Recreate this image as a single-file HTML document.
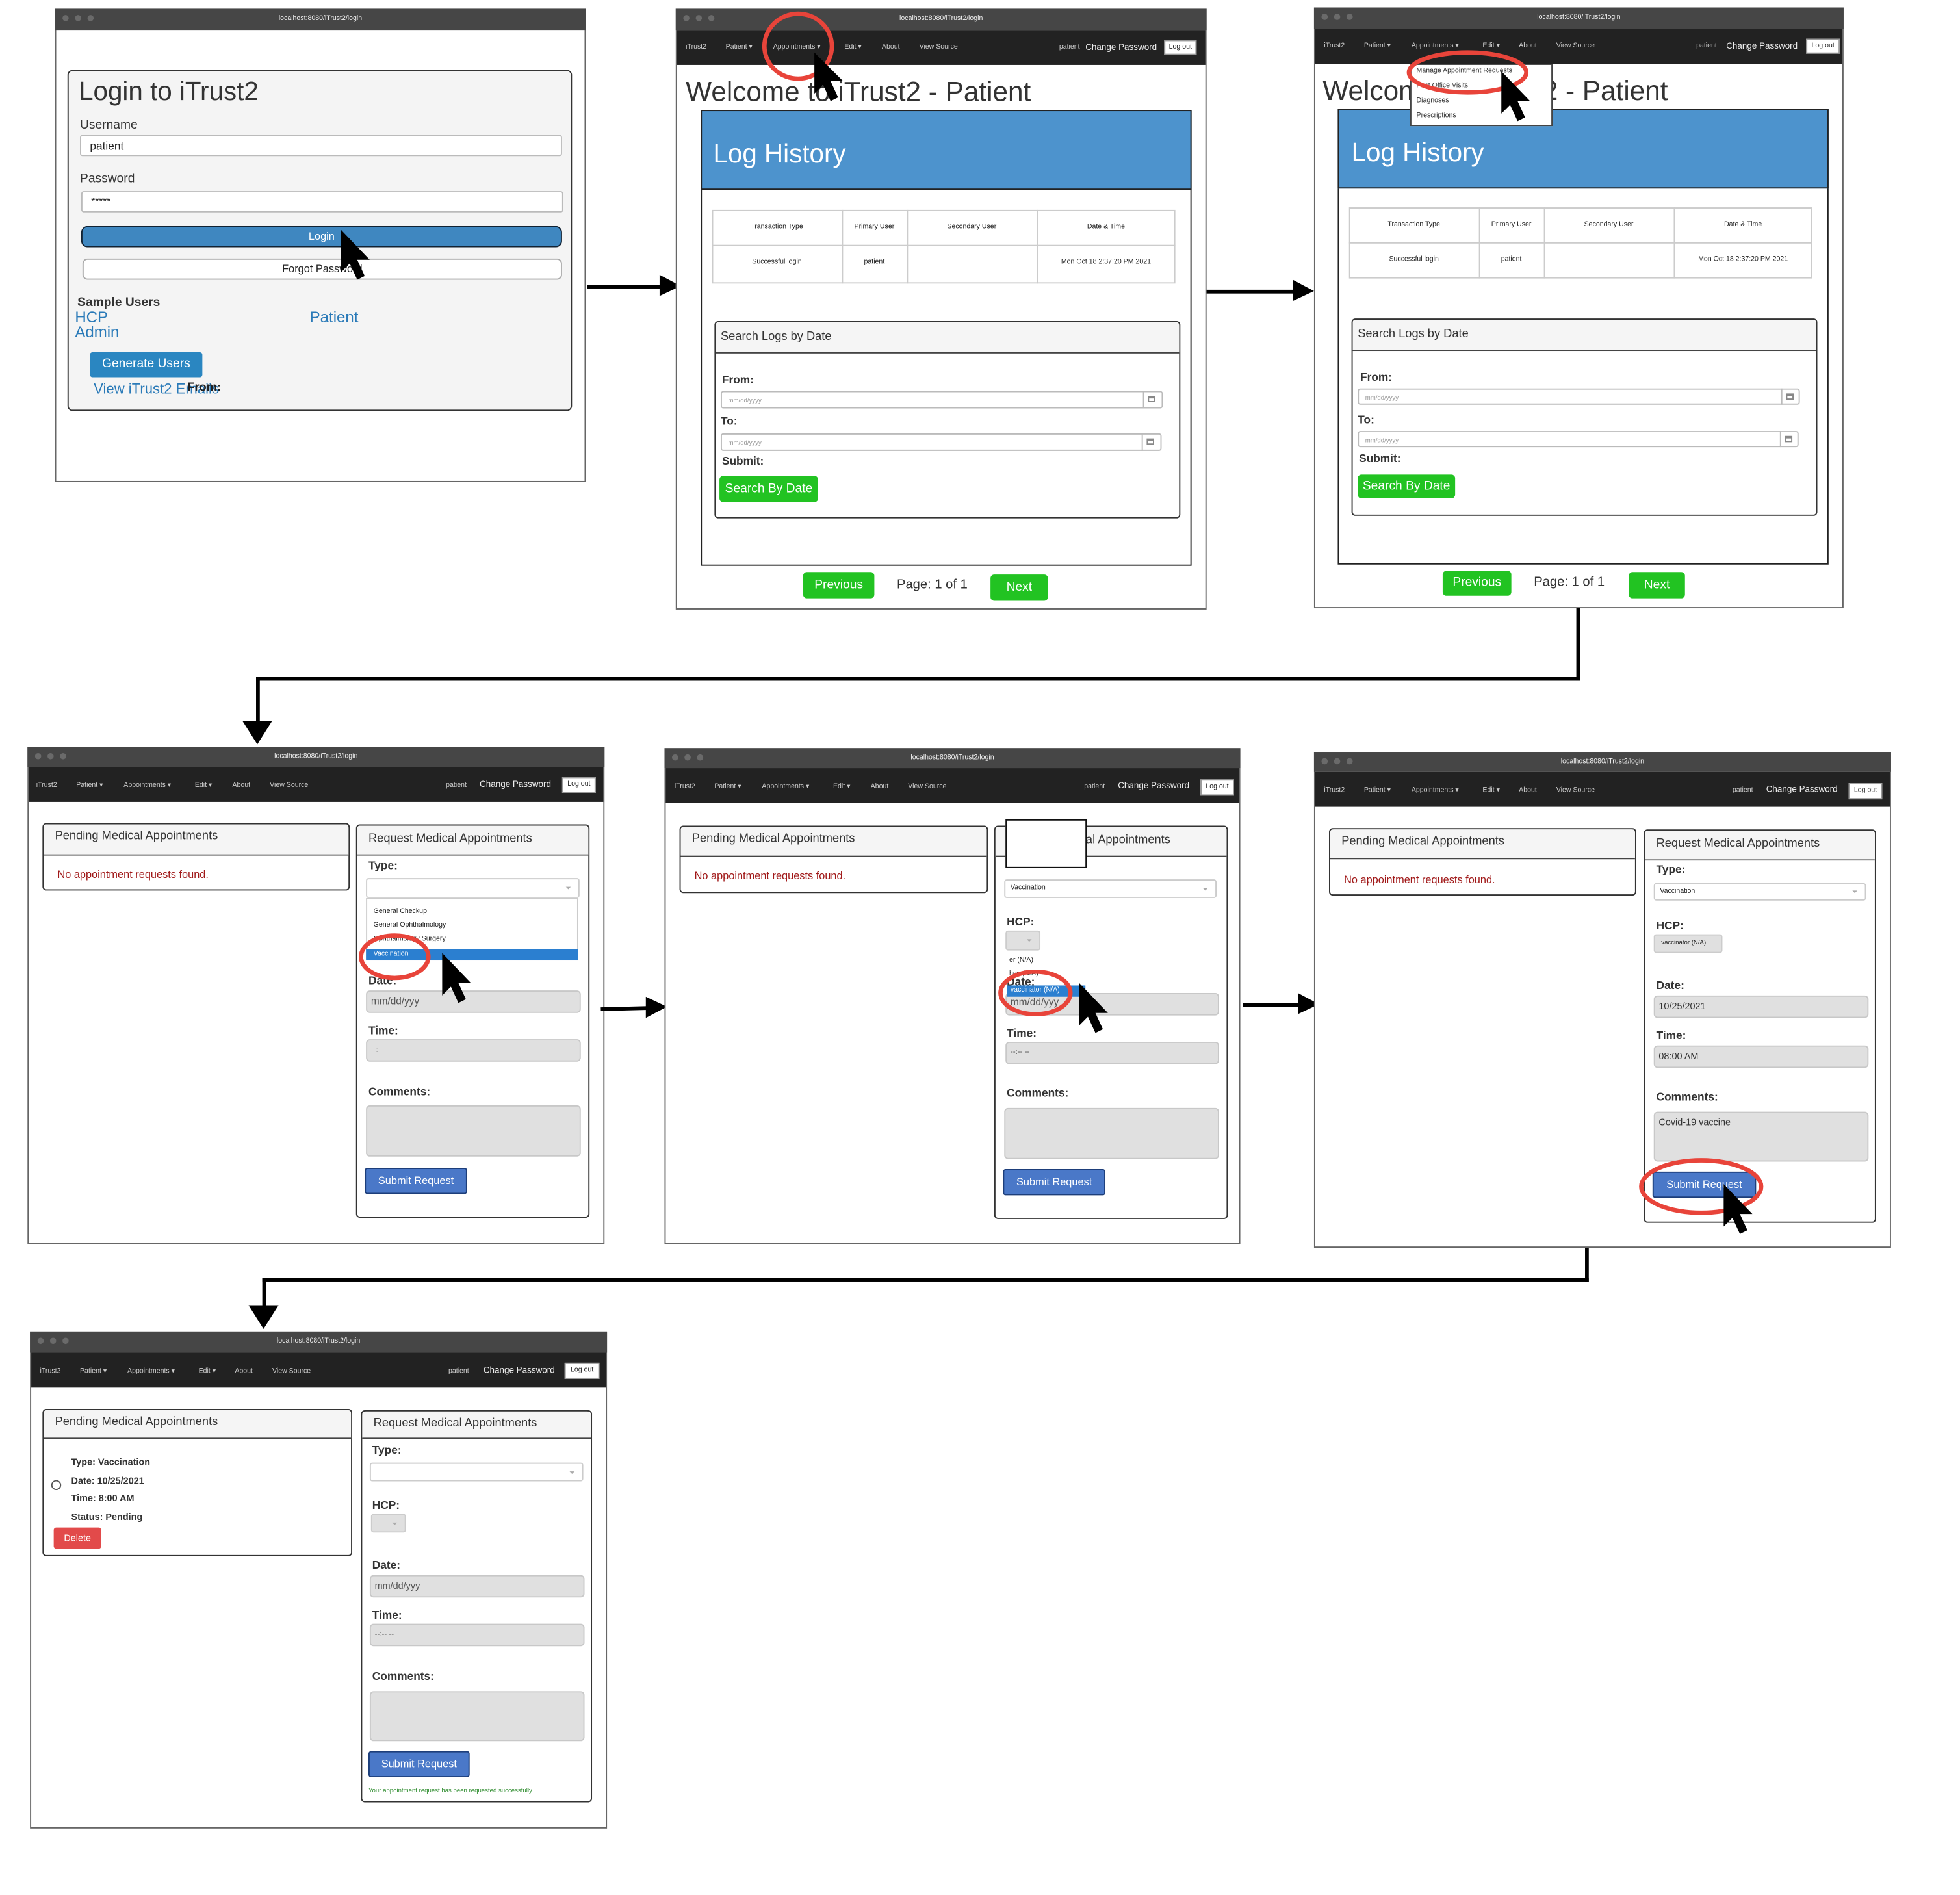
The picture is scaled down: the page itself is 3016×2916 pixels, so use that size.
<!DOCTYPE html>
<html><head><meta charset="utf-8">
<style>
*{box-sizing:border-box;margin:0;padding:0}
html,body{width:3016px;height:2915px;background:#fff;overflow:hidden}
#root{position:absolute;left:0;top:0;width:1570px;height:1517px;transform:scale(1.922);transform-origin:0 0;font-family:"Liberation Sans",sans-serif;color:#222}
.a{position:absolute;white-space:nowrap}
.win{position:absolute;border:1px solid #666;background:#fff}
.tb{position:absolute;background:#464646;color:#eee;font-size:5.5px;text-align:center}
.dot{position:absolute;width:5px;height:5px;border-radius:50%;background:#6a6a6a}
.nav{position:absolute;background:#222}
.nt{position:absolute;color:#ccc;font-size:5.5px;white-space:nowrap}
.cp{position:absolute;color:#eee;font-size:7px;white-space:nowrap}
.lo{position:absolute;background:#fff;border:1px solid #999;color:#222;font-size:5.5px;text-align:center}
.pnl{position:absolute;border:1px solid #333;border-radius:3px;background:#fff}
.ph{position:absolute;left:0;right:0;top:0;background:#f5f5f5;border-bottom:1px solid #444;border-radius:3px 3px 0 0;font-size:9.5px;color:#333;padding-left:9px}
.lbl{position:absolute;font-weight:bold;font-size:9px;color:#333;white-space:nowrap}
.inp{position:absolute;background:#e0e0e0;border:1px solid #c8c8c8;border-radius:3px;font-size:8px;color:#555;padding-left:3px}
.sel{position:absolute;background:#fff;border:1px solid #ccc;border-radius:2px;font-size:5.5px;color:#222;padding-left:4px}
.car{position:absolute;width:0;height:0;border-left:2.5px solid transparent;border-right:2.5px solid transparent;border-top:2.5px solid #aaa}
.btnb{position:absolute;background:#4a78c8;border:1px solid #1d3e7a;border-radius:2px;color:#fff;font-size:8.5px;text-align:center}
.grn{position:absolute;background:#22c322;border-radius:3px;color:#fff;font-size:10px;text-align:center}
.line{position:absolute;background:#000}
.cal{position:absolute;width:6px;height:5px;border:1px solid #888;border-top:2px solid #888}
</style></head><body><div id="root">

<!-- ================= WINDOW 1 LOGIN ================= -->
<div class="win" style="left:44px;top:7px;width:425px;height:379px"></div>
<div class="tb" style="left:44px;top:7px;width:425px;height:17px;line-height:17px">localhost:8080/iTrust2/login</div>
<div class="dot" style="left:50px;top:12px"></div><div class="dot" style="left:60px;top:12px"></div><div class="dot" style="left:70px;top:12px"></div>
<div class="a" style="left:54px;top:56px;width:404px;height:273px;background:#f4f4f4;border:1px solid #333;border-radius:4px"></div>
<div class="a" style="left:63px;top:62px;font-size:21px;color:#333">Login to iTrust2</div>
<div class="a" style="left:64px;top:95px;font-size:10px;color:#333">Username</div>
<div class="a" style="left:64px;top:108px;width:386px;height:17px;background:#fff;border:1px solid #bbb;border-radius:2px;font-size:9px;padding:3px 7px">patient</div>
<div class="a" style="left:64px;top:138px;font-size:10px;color:#333">Password</div>
<div class="a" style="left:65px;top:153px;width:386px;height:17px;background:#fff;border:1px solid #bbb;border-radius:2px;font-size:8px;padding:3px 7px">*****</div>
<div class="a" style="left:65px;top:181px;width:385px;height:17px;background:#3f87c0;border:1px solid #123;border-radius:5px;color:#fff;font-size:8.5px;text-align:center;line-height:15px">Login</div>
<div class="a" style="left:66px;top:207px;width:384px;height:17px;background:#fff;border:1px solid #aaa;border-radius:4px;font-size:8.5px;text-align:center;line-height:15px">Forgot Password</div>
<div class="a" style="left:62px;top:237px;font-size:10px;font-weight:bold;color:#333">Sample Users</div>
<div class="a" style="left:60px;top:247px;font-size:12.5px;color:#2a7ab8">HCP</div>
<div class="a" style="left:248px;top:247px;font-size:12.5px;color:#2a7ab8">Patient</div>
<div class="a" style="left:60px;top:259px;font-size:12.5px;color:#2a7ab8">Admin</div>
<div class="a" style="left:72px;top:282px;width:90px;height:20px;background:#2a86c1;border-radius:2px;color:#fff;font-size:10px;text-align:center;line-height:20px">Generate Users</div>
<div class="a" style="left:75px;top:306px;font-size:11.5px;color:#2a7ab8">View iTrust2 Emails</div>
<div class="a" style="left:150px;top:305px;font-size:9.5px;font-weight:bold;color:#222">From:</div>
<svg class="a" style="left:270px;top:184px" width="34" height="46"><polygon points="3,0 3,34 10,27 16,40 22,37 16,24 26,24" fill="#000"/></svg>

<!-- arrow 1 -->
<div class="line" style="left:470px;top:227.5px;width:62px;height:3px"></div>
<svg class="a" style="left:528px;top:220px" width="18" height="18"><polygon points="0,0 17,9 0,17" fill="#000"/></svg>

<!-- ================= WINDOW 2 ================= -->
<div class="win" style="left:541px;top:7px;width:425px;height:481px"></div>
<div class="tb" style="left:541px;top:7px;width:425px;height:17px;line-height:17px">localhost:8080/iTrust2/login</div>
<div class="dot" style="left:547px;top:12px"></div><div class="dot" style="left:557px;top:12px"></div><div class="dot" style="left:567px;top:12px"></div>
<div class="nav" style="left:542px;top:24px;width:423px;height:28px"></div>
<div class="nt" style="left:549px;top:35px">iTrust2</div><div class="nt" style="left:581px;top:35px">Patient ▾</div><div class="nt" style="left:619px;top:35px">Appointments ▾</div><div class="nt" style="left:676px;top:35px">Edit ▾</div><div class="nt" style="left:706px;top:35px">About</div><div class="nt" style="left:736px;top:35px">View Source</div>
<div class="nt" style="left:848px;top:35px">patient</div><div class="cp" style="left:869px;top:35px">Change Password</div>
<div class="lo" style="left:932px;top:32px;width:26px;height:12px;line-height:10px">Log out</div>
<div class="a" style="left:549px;top:61px;font-size:22px;color:#333">Welcome to iTrust2 - Patient</div>
<div class="a" style="left:561px;top:88px;width:393px;height:365px;border:1px solid #222;background:#fff"></div>
<div class="a" style="left:561px;top:88px;width:393px;height:64px;background:#4d93cd;border:1px solid #222"></div>
<div class="a" style="left:571px;top:112px;font-size:21px;color:#fff">Log History</div>
<div class="a" style="left:570px;top:168px;width:371px;height:59px;border:1px solid #ccc"></div>
<div class="a" style="left:570px;top:196px;width:371px;height:1px;background:#ccc"></div>
<div class="a" style="left:674px;top:168px;width:1px;height:59px;background:#ccc"></div>
<div class="a" style="left:726px;top:168px;width:1px;height:59px;background:#ccc"></div>
<div class="a" style="left:830px;top:168px;width:1px;height:59px;background:#ccc"></div>
<div class="a" style="left:570px;top:179px;width:104px;text-align:center;font-size:5.5px">Transaction Type</div>
<div class="a" style="left:674px;top:179px;width:52px;text-align:center;font-size:5.5px">Primary User</div>
<div class="a" style="left:726px;top:179px;width:104px;text-align:center;font-size:5.5px">Secondary User</div>
<div class="a" style="left:830px;top:179px;width:111px;text-align:center;font-size:5.5px">Date &amp; Time</div>
<div class="a" style="left:570px;top:207px;width:104px;text-align:center;font-size:5.5px">Successful login</div>
<div class="a" style="left:674px;top:207px;width:52px;text-align:center;font-size:5.5px">patient</div>
<div class="a" style="left:830px;top:207px;width:111px;text-align:center;font-size:5.5px">Mon Oct 18 2:37:20 PM 2021</div>
<div class="pnl" style="left:572px;top:257px;width:373px;height:158px"><div class="ph" style="height:25px;line-height:24px;padding-left:4px">Search Logs by Date</div></div>
<div class="lbl" style="left:578px;top:299px">From:</div>
<div class="a" style="left:577px;top:313px;width:354px;height:14px;border:1px solid #bbb;border-radius:2px;font-size:5px;color:#999;padding:4px 5px">mm/dd/yyyy</div>
<div class="a" style="left:577px;top:332px;font-weight:bold;font-size:9px;color:#333">To:</div>
<div class="a" style="left:577px;top:347px;width:353px;height:14px;border:1px solid #bbb;border-radius:2px;font-size:5px;color:#999;padding:4px 5px">mm/dd/yyyy</div>
<div class="a" style="left:915px;top:313px;width:1px;height:14px;background:#bbb"></div><div class="cal" style="left:919px;top:317px"></div>
<div class="a" style="left:914px;top:347px;width:1px;height:14px;background:#bbb"></div><div class="cal" style="left:918px;top:351px"></div>
<div class="lbl" style="left:578px;top:364px">Submit:</div>
<div class="grn" style="left:576px;top:381px;width:79px;height:21px;line-height:21px">Search By Date</div>
<div class="grn" style="left:643px;top:458px;width:57px;height:21px;line-height:21px">Previous</div>
<div class="a" style="left:718px;top:462px;font-size:10.5px;color:#333">Page: 1 of 1</div>
<div class="grn" style="left:793px;top:460px;width:46px;height:21px;line-height:21px">Next</div>
<svg class="a" style="left:605px;top:8px" width="70" height="80"><ellipse cx="34" cy="29" rx="27" ry="26" fill="none" stroke="#e8443a" stroke-width="3.5"/><polygon points="47,34 47,67 54,60 60,73 66,70 60,57 70,57" fill="#000"/></svg>

<!-- arrow 2 -->
<div class="line" style="left:966px;top:231.5px;width:72px;height:3px"></div>
<svg class="a" style="left:1035px;top:224px" width="18" height="18"><polygon points="0,0 17,9 0,17" fill="#000"/></svg>

<!-- ================= WINDOW 3 ================= -->
<div class="win" style="left:1052px;top:6px;width:424px;height:481px"></div>
<div class="tb" style="left:1052px;top:6px;width:424px;height:17px;line-height:17px">localhost:8080/iTrust2/login</div>
<div class="dot" style="left:1058px;top:11px"></div><div class="dot" style="left:1068px;top:11px"></div><div class="dot" style="left:1078px;top:11px"></div>
<div class="nav" style="left:1053px;top:23px;width:422px;height:28px"></div>
<div class="nt" style="left:1060px;top:34px">iTrust2</div><div class="nt" style="left:1092px;top:34px">Patient ▾</div><div class="nt" style="left:1130px;top:34px">Appointments ▾</div><div class="nt" style="left:1187px;top:34px">Edit ▾</div><div class="nt" style="left:1216px;top:34px">About</div><div class="nt" style="left:1246px;top:34px">View Source</div>
<div class="nt" style="left:1358px;top:34px">patient</div><div class="cp" style="left:1382px;top:34px">Change Password</div>
<div class="lo" style="left:1446px;top:31px;width:27px;height:12px;line-height:10px">Log out</div>
<div class="a" style="left:1059px;top:60px;font-size:22px;color:#333">Welcome to iTrust2 - Patient</div>
<div class="a" style="left:1071px;top:87px;width:393px;height:365px;border:1px solid #222;background:#fff"></div>
<div class="a" style="left:1071px;top:87px;width:393px;height:64px;background:#4d93cd;border:1px solid #222"></div>
<div class="a" style="left:1082px;top:111px;font-size:21px;color:#fff">Log History</div>
<div class="a" style="left:1080px;top:166px;width:371px;height:57px;border:1px solid #ccc"></div>
<div class="a" style="left:1080px;top:194px;width:371px;height:1px;background:#ccc"></div>
<div class="a" style="left:1184px;top:166px;width:1px;height:57px;background:#ccc"></div>
<div class="a" style="left:1236px;top:166px;width:1px;height:57px;background:#ccc"></div>
<div class="a" style="left:1340px;top:166px;width:1px;height:57px;background:#ccc"></div>
<div class="a" style="left:1080px;top:177px;width:104px;text-align:center;font-size:5.5px">Transaction Type</div>
<div class="a" style="left:1184px;top:177px;width:52px;text-align:center;font-size:5.5px">Primary User</div>
<div class="a" style="left:1236px;top:177px;width:104px;text-align:center;font-size:5.5px">Secondary User</div>
<div class="a" style="left:1340px;top:177px;width:111px;text-align:center;font-size:5.5px">Date &amp; Time</div>
<div class="a" style="left:1080px;top:205px;width:104px;text-align:center;font-size:5.5px">Successful login</div>
<div class="a" style="left:1184px;top:205px;width:52px;text-align:center;font-size:5.5px">patient</div>
<div class="a" style="left:1340px;top:205px;width:111px;text-align:center;font-size:5.5px">Mon Oct 18 2:37:20 PM 2021</div>
<div class="pnl" style="left:1082px;top:255px;width:373px;height:158px"><div class="ph" style="height:25px;line-height:24px;padding-left:4px">Search Logs by Date</div></div>
<div class="lbl" style="left:1089px;top:297px">From:</div>
<div class="a" style="left:1087px;top:311px;width:354px;height:13px;border:1px solid #bbb;border-radius:2px;font-size:5px;color:#999;padding:4px 5px">mm/dd/yyyy</div>
<div class="a" style="left:1426px;top:311px;width:1px;height:13px;background:#bbb"></div><div class="cal" style="left:1430px;top:315px"></div>
<div class="a" style="left:1087px;top:331px;font-weight:bold;font-size:9px;color:#333">To:</div>
<div class="a" style="left:1087px;top:345px;width:353px;height:13px;border:1px solid #bbb;border-radius:2px;font-size:5px;color:#999;padding:4px 5px">mm/dd/yyyy</div>
<div class="a" style="left:1425px;top:345px;width:1px;height:13px;background:#bbb"></div><div class="cal" style="left:1429px;top:349px"></div>
<div class="lbl" style="left:1088px;top:362px">Submit:</div>
<div class="grn" style="left:1087px;top:380px;width:78px;height:19px;line-height:19px">Search By Date</div>
<div class="grn" style="left:1155px;top:457px;width:55px;height:20px;line-height:20px">Previous</div>
<div class="a" style="left:1228px;top:460px;font-size:10.5px;color:#333">Page: 1 of 1</div>
<div class="grn" style="left:1304px;top:458px;width:45px;height:21px;line-height:21px">Next</div>
<div class="a" style="left:1129px;top:51px;width:114px;height:50px;background:#fff;border:1px solid #444"></div>
<div class="a" style="left:1134px;top:54px;font-size:5.5px;color:#333">Manage Appointment Requests</div>
<div class="a" style="left:1134px;top:66px;font-size:5.5px;color:#333">Past Office Visits</div>
<div class="a" style="left:1134px;top:78px;font-size:5.5px;color:#333">Diagnoses</div>
<div class="a" style="left:1134px;top:90px;font-size:5.5px;color:#333">Prescriptions</div>
<svg class="a" style="left:1125px;top:35px" width="110" height="70"><ellipse cx="50" cy="23" rx="47" ry="16" fill="none" stroke="#e8443a" stroke-width="3.5"/><polygon points="77,22 77,56 84,49 90,62 96,59 90,46 100,46" fill="#000"/></svg>

<!-- connector 1 -->
<div class="line" style="left:1261.5px;top:487px;width:3px;height:58px"></div>
<div class="line" style="left:204.5px;top:542px;height:3px;width:1060px"></div>
<div class="line" style="left:204.5px;top:542px;width:3px;height:40px"></div>
<svg class="a" style="left:194px;top:577px" width="24" height="20"><polygon points="0,0 24,0 12,19" fill="#000"/></svg>

<!-- ================= WINDOW A ================= -->
<div class="win" style="left:22px;top:598px;width:462px;height:398px"></div>
<div class="tb" style="left:22px;top:598px;width:462px;height:16px;line-height:16px">localhost:8080/iTrust2/login</div>
<div class="dot" style="left:28px;top:603px"></div><div class="dot" style="left:38px;top:603px"></div><div class="dot" style="left:48px;top:603px"></div>
<div class="nav" style="left:23px;top:614px;width:460px;height:28px"></div>
<div class="nt" style="left:29px;top:626px">iTrust2</div><div class="nt" style="left:61px;top:626px">Patient ▾</div><div class="nt" style="left:99px;top:626px">Appointments ▾</div><div class="nt" style="left:156px;top:626px">Edit ▾</div><div class="nt" style="left:186px;top:626px">About</div><div class="nt" style="left:216px;top:626px">View Source</div>
<div class="nt" style="left:357px;top:626px">patient</div><div class="cp" style="left:384px;top:625px">Change Password</div>
<div class="lo" style="left:450px;top:622px;width:27px;height:13px;line-height:11px">Log out</div>
<div class="pnl" style="left:34px;top:659px;width:246px;height:54px"><div class="ph" style="height:25px;line-height:20px">Pending Medical Appointments</div></div>
<div class="a" style="left:46px;top:695px;font-size:8.5px;color:#a01818">No appointment requests found.</div>
<div class="pnl" style="left:285px;top:660px;width:187px;height:315px"><div class="ph" style="height:24px;line-height:22px">Request Medical Appointments</div></div>
<div class="lbl" style="left:295px;top:688px">Type:</div>
<div class="sel" style="left:293px;top:703px;width:171px;height:16px"></div><div class="car" style="left:453px;top:710px"></div>
<div class="a" style="left:293px;top:719px;width:170px;height:49px;background:#fff;border:1px solid #ccc"></div>
<div class="a" style="left:299px;top:727px;font-size:5.5px">General Checkup</div>
<div class="a" style="left:299px;top:738px;font-size:5.5px">General Ophthalmology</div>
<div class="a" style="left:299px;top:749px;font-size:5.5px">Ophthalmology Surgery</div>
<div class="a" style="left:293px;top:760px;width:170px;height:9px;background:#2b7fd0;color:#fff;font-size:5.5px;padding-left:6px;line-height:9px">Vaccination</div>
<div class="lbl" style="left:295px;top:780px">Date:</div>
<div class="inp" style="left:293px;top:793px;width:172px;height:18px;line-height:16px">mm/dd/yyy</div>
<div class="lbl" style="left:295px;top:820px">Time:</div>
<div class="inp" style="left:293px;top:832px;width:172px;height:18px;line-height:16px;font-size:6px">--:-- --</div>
<div class="lbl" style="left:295px;top:869px">Comments:</div>
<div class="inp" style="left:293px;top:885px;width:172px;height:41px"></div>
<div class="btnb" style="left:292px;top:935px;width:82px;height:21px;line-height:19px">Submit Request</div>
<svg class="a" style="left:286px;top:745px" width="100" height="60"><ellipse cx="30" cy="21" rx="27" ry="17" fill="none" stroke="#e8443a" stroke-width="3.5"/><polygon points="68,18 68,52 75,45 81,58 87,55 81,42 91,42" fill="#000"/></svg>

<!-- arrow A->B -->
<div class="line" style="left:481px;top:806px;width:40px;height:3px;transform:rotate(-1.5deg)"></div>
<svg class="a" style="left:517px;top:798px" width="18" height="18"><polygon points="0,0 17,8 0,17" fill="#000"/></svg>

<!-- ================= WINDOW B ================= -->
<div class="win" style="left:532px;top:599px;width:461px;height:397px"></div>
<div class="tb" style="left:532px;top:599px;width:461px;height:16px;line-height:16px">localhost:8080/iTrust2/login</div>
<div class="dot" style="left:538px;top:604px"></div><div class="dot" style="left:548px;top:604px"></div><div class="dot" style="left:558px;top:604px"></div>
<div class="nav" style="left:533px;top:615px;width:459px;height:28px"></div>
<div class="nt" style="left:540px;top:627px">iTrust2</div><div class="nt" style="left:572px;top:627px">Patient ▾</div><div class="nt" style="left:610px;top:627px">Appointments ▾</div><div class="nt" style="left:667px;top:627px">Edit ▾</div><div class="nt" style="left:697px;top:627px">About</div><div class="nt" style="left:727px;top:627px">View Source</div>
<div class="nt" style="left:868px;top:627px">patient</div><div class="cp" style="left:895px;top:626px">Change Password</div>
<div class="lo" style="left:961px;top:624px;width:27px;height:13px;line-height:11px">Log out</div>
<div class="pnl" style="left:544px;top:661px;width:247px;height:54px"><div class="ph" style="height:24px;line-height:20px">Pending Medical Appointments</div></div>
<div class="a" style="left:556px;top:696px;font-size:8.5px;color:#a01818">No appointment requests found.</div>
<div class="pnl" style="left:796px;top:661px;width:187px;height:315px"><div class="ph" style="height:24px;line-height:22px">Request Medical Appointments</div></div>
<div class="a" style="left:805px;top:656px;width:65px;height:39px;background:#fff;border:1px solid #111"></div>
<div class="sel" style="left:804px;top:704px;width:170px;height:15px;line-height:13px">Vaccination</div><div class="car" style="left:963px;top:711px"></div>
<div class="lbl" style="left:806px;top:733px">HCP:</div>
<div class="a" style="left:805px;top:745px;width:28px;height:16px;background:#e0e0e0;border:1px solid #ccc;border-radius:2px"></div><div class="car" style="left:822px;top:752px"></div>
<div class="a" style="left:808px;top:766px;font-size:5.5px">er (N/A)</div>
<div class="a" style="left:808px;top:777px;font-size:5.5px">hcp (N/A)</div>
<div class="lbl" style="left:806px;top:781px">Date:</div>
<div class="inp" style="left:805px;top:795px;width:171px;height:18px;line-height:14px">mm/dd/yyy</div>
<div class="a" style="left:806px;top:789px;width:63px;height:9px;background:#2b7fd0;color:#fff;font-size:5.5px;padding-left:3px;line-height:9px">vaccinator (N/A)</div>
<div class="lbl" style="left:806px;top:822px">Time:</div>
<div class="inp" style="left:805px;top:834px;width:171px;height:18px;line-height:16px;font-size:6px">--:-- --</div>
<div class="lbl" style="left:806px;top:870px">Comments:</div>
<div class="inp" style="left:804px;top:887px;width:172px;height:41px"></div>
<div class="btnb" style="left:803px;top:936px;width:82px;height:21px;line-height:19px">Submit Request</div>
<svg class="a" style="left:798px;top:775px" width="100" height="60"><ellipse cx="31" cy="20" rx="28" ry="17" fill="none" stroke="#e8443a" stroke-width="3.5"/><polygon points="66,12 66,46 73,39 79,52 85,49 79,36 89,36" fill="#000"/></svg>

<!-- arrow B->C -->
<div class="line" style="left:995px;top:802.5px;width:47px;height:3px"></div>
<svg class="a" style="left:1039px;top:795px" width="18" height="18"><polygon points="0,0 17,9 0,17" fill="#000"/></svg>

<!-- ================= WINDOW C ================= -->
<div class="win" style="left:1052px;top:602px;width:462px;height:397px"></div>
<div class="tb" style="left:1052px;top:602px;width:462px;height:16px;line-height:16px">localhost:8080/iTrust2/login</div>
<div class="dot" style="left:1058px;top:607px"></div><div class="dot" style="left:1068px;top:607px"></div><div class="dot" style="left:1078px;top:607px"></div>
<div class="nav" style="left:1053px;top:618px;width:460px;height:28px"></div>
<div class="nt" style="left:1060px;top:630px">iTrust2</div><div class="nt" style="left:1092px;top:630px">Patient ▾</div><div class="nt" style="left:1130px;top:630px">Appointments ▾</div><div class="nt" style="left:1187px;top:630px">Edit ▾</div><div class="nt" style="left:1216px;top:630px">About</div><div class="nt" style="left:1246px;top:630px">View Source</div>
<div class="nt" style="left:1387px;top:630px">patient</div><div class="cp" style="left:1414px;top:629px">Change Password</div>
<div class="lo" style="left:1480px;top:627px;width:27px;height:13px;line-height:11px">Log out</div>
<div class="pnl" style="left:1064px;top:663px;width:246px;height:54px"><div class="ph" style="height:24px;line-height:20px">Pending Medical Appointments</div></div>
<div class="a" style="left:1076px;top:699px;font-size:8.5px;color:#a01818">No appointment requests found.</div>
<div class="pnl" style="left:1316px;top:664px;width:186px;height:315px"><div class="ph" style="height:24px;line-height:22px">Request Medical Appointments</div></div>
<div class="lbl" style="left:1326px;top:691px">Type:</div>
<div class="sel" style="left:1324px;top:707px;width:170px;height:14px;line-height:12px">Vaccination</div><div class="car" style="left:1483px;top:713px"></div>
<div class="lbl" style="left:1326px;top:736px">HCP:</div>
<div class="a" style="left:1324px;top:748px;width:55px;height:15px;background:#e0e0e0;border:1px solid #ccc;border-radius:2px;font-size:5px;padding-left:5px;line-height:13px">vaccinator (N/A)</div>
<div class="lbl" style="left:1326px;top:784px">Date:</div>
<div class="inp" style="left:1324px;top:797px;width:172px;height:18px;line-height:16px;font-size:7.5px;color:#333">10/25/2021</div>
<div class="lbl" style="left:1326px;top:824px">Time:</div>
<div class="inp" style="left:1324px;top:837px;width:172px;height:18px;line-height:16px;font-size:7.5px;color:#333">08:00 AM</div>
<div class="lbl" style="left:1326px;top:873px">Comments:</div>
<div class="inp" style="left:1324px;top:890px;width:172px;height:40px;font-size:7.5px;color:#333;padding:3px">Covid-19 vaccine</div>
<div class="btnb" style="left:1323px;top:938px;width:83px;height:21px;line-height:19px">Submit Request</div>
<svg class="a" style="left:1310px;top:925px" width="110" height="70"><ellipse cx="52" cy="25" rx="48" ry="21" fill="none" stroke="#e8443a" stroke-width="3.5"/><polygon points="70,23 70,57 77,50 83,63 89,60 83,47 93,47" fill="#000"/></svg>

<!-- connector 2 -->
<div class="line" style="left:1268.5px;top:999px;width:3px;height:27px"></div>
<div class="line" style="left:209.5px;top:1022.5px;width:1062px;height:3px"></div>
<div class="line" style="left:209.5px;top:1022.5px;width:3px;height:28px"></div>
<svg class="a" style="left:199px;top:1045px" width="24" height="20"><polygon points="0,0 24,0 12,19" fill="#000"/></svg>

<!-- ================= WINDOW D ================= -->
<div class="win" style="left:24px;top:1066px;width:462px;height:398px"></div>
<div class="tb" style="left:24px;top:1066px;width:462px;height:17px;line-height:17px">localhost:8080/iTrust2/login</div>
<div class="dot" style="left:30px;top:1071px"></div><div class="dot" style="left:40px;top:1071px"></div><div class="dot" style="left:50px;top:1071px"></div>
<div class="nav" style="left:25px;top:1083px;width:460px;height:28px"></div>
<div class="nt" style="left:32px;top:1095px">iTrust2</div><div class="nt" style="left:64px;top:1095px">Patient ▾</div><div class="nt" style="left:102px;top:1095px">Appointments ▾</div><div class="nt" style="left:159px;top:1095px">Edit ▾</div><div class="nt" style="left:188px;top:1095px">About</div><div class="nt" style="left:218px;top:1095px">View Source</div>
<div class="nt" style="left:359px;top:1095px">patient</div><div class="cp" style="left:387px;top:1094px">Change Password</div>
<div class="lo" style="left:452px;top:1091px;width:28px;height:13px;line-height:11px">Log out</div>
<div class="pnl" style="left:34px;top:1128px;width:248px;height:118px"><div class="ph" style="height:23px;line-height:19px">Pending Medical Appointments</div></div>
<div class="a" style="left:57px;top:1164px;font-size:7.5px;font-weight:bold;line-height:14.5px;color:#333">Type: Vaccination<br>Date: 10/25/2021<br>Time: 8:00 AM<br>Status: Pending</div>
<div class="a" style="left:41px;top:1185px;width:8px;height:8px;border:1px solid #555;border-radius:50%;background:#fff"></div>
<div class="a" style="left:43px;top:1223px;width:38px;height:17px;background:#e24a4a;border-radius:2px;color:#fff;font-size:7.5px;text-align:center;line-height:17px">Delete</div>
<div class="pnl" style="left:289px;top:1129px;width:185px;height:314px"><div class="ph" style="height:22px;line-height:20px">Request Medical Appointments</div></div>
<div class="lbl" style="left:298px;top:1156px">Type:</div>
<div class="sel" style="left:296px;top:1171px;width:171px;height:15px"></div><div class="car" style="left:456px;top:1178px"></div>
<div class="lbl" style="left:298px;top:1200px">HCP:</div>
<div class="a" style="left:297px;top:1212px;width:28px;height:15px;background:#e0e0e0;border:1px solid #ccc;border-radius:2px"></div><div class="car" style="left:314px;top:1219px"></div>
<div class="lbl" style="left:298px;top:1248px">Date:</div>
<div class="inp" style="left:296px;top:1261px;width:172px;height:18px;line-height:16px;font-size:7.5px">mm/dd/yyy</div>
<div class="lbl" style="left:298px;top:1288px">Time:</div>
<div class="inp" style="left:296px;top:1300px;width:172px;height:18px;line-height:16px;font-size:6px">--:-- --</div>
<div class="lbl" style="left:298px;top:1337px">Comments:</div>
<div class="inp" style="left:296px;top:1354px;width:172px;height:40px"></div>
<div class="btnb" style="left:295px;top:1402px;width:81px;height:21px;line-height:19px">Submit Request</div>
<div class="a" style="left:295px;top:1431px;font-size:5px;color:#2a8a2a">Your appointment request has been requested successfully.</div>

</div></body></html>
